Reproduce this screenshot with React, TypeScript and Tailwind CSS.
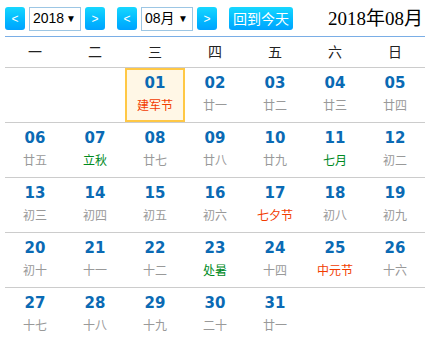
import React from 'react'

type Day = { d: string; l: string; c?: 'red' | 'green' }

const weeks: (Day | null)[][] = [
  [null, null, { d: '01', l: '建军节', c: 'red' }, { d: '02', l: '廿一' }, { d: '03', l: '廿二' }, { d: '04', l: '廿三' }, { d: '05', l: '廿四' }],
  [{ d: '06', l: '廿五' }, { d: '07', l: '立秋', c: 'green' }, { d: '08', l: '廿七' }, { d: '09', l: '廿八' }, { d: '10', l: '廿九' }, { d: '11', l: '七月', c: 'green' }, { d: '12', l: '初二' }],
  [{ d: '13', l: '初三' }, { d: '14', l: '初四' }, { d: '15', l: '初五' }, { d: '16', l: '初六' }, { d: '17', l: '七夕节', c: 'red' }, { d: '18', l: '初八' }, { d: '19', l: '初九' }],
  [{ d: '20', l: '初十' }, { d: '21', l: '十一' }, { d: '22', l: '十二' }, { d: '23', l: '处暑', c: 'green' }, { d: '24', l: '十四' }, { d: '25', l: '中元节', c: 'red' }, { d: '26', l: '十六' }],
  [{ d: '27', l: '十七' }, { d: '28', l: '十八' }, { d: '29', l: '十九' }, { d: '30', l: '二十' }, { d: '31', l: '廿一' }, null, null],
]

const weekdays = ['一', '二', '三', '四', '五', '六', '日']

const font = { fontFamily: '"Liberation Sans", "Noto Sans CJK SC", sans-serif' }

const NavBtn = ({ children }: { children: React.ReactNode }) => (
  <button className="w-[20px] h-[23px] rounded-[3px] bg-gradient-to-b from-[#17d7ff] to-[#00a2ff] text-white text-[12px] leading-none flex items-center justify-center">
    {children}
  </button>
)

const Select = ({ value }: { value: string }) => (
  <div className="w-[52px] h-[24px] border border-[#9cc6e4] bg-white flex items-center justify-between pl-[3px] pr-[4px] text-[14px] text-black">
    <span>{value}</span>
    <span className="text-[10px]">▼</span>
  </div>
)

export default function App() {
  return (
    <div className="w-[430px] h-[344px] bg-white px-[5px] overflow-hidden" style={font}>
      {/* header */}
      <div className="flex items-center h-[37px] pt-[1px] border-b border-[#7aaee6]">
        <NavBtn>&lt;</NavBtn>
        <div className="ml-[4px]"><Select value="2018" /></div>
        <div className="ml-[4px]"><NavBtn>&gt;</NavBtn></div>
        <div className="ml-[12px]"><NavBtn>&lt;</NavBtn></div>
        <div className="ml-[4px]"><Select value="08月" /></div>
        <div className="ml-[4px]"><NavBtn>&gt;</NavBtn></div>
        <button className="ml-[12px] w-[64px] h-[23px] rounded-[3px] bg-gradient-to-b from-[#17d7ff] to-[#00a2ff] text-white text-[14px] leading-none">
          回到今天
        </button>
        <div
          className="ml-auto text-[19px] text-black leading-none mr-[2px]"
          style={{ fontFamily: '"Liberation Serif", "Noto Sans CJK SC", serif' }}
        >
          2018年08月
        </div>
      </div>

      {/* weekdays */}
      <div className="grid grid-cols-7 h-[31px] border-b border-[#cccccc]">
        {weekdays.map((w) => (
          <div key={w} className="flex items-center justify-center text-[14px] text-[#222]">
            {w}
          </div>
        ))}
      </div>

      {/* days */}
      {weeks.map((week, i) => (
        <div
          key={i}
          className={'grid grid-cols-7 h-[55px] ' + (i < weeks.length - 1 ? 'border-b border-[#cccccc]' : '')}
        >
          {week.map((day, j) =>
            day ? (
              <div
                key={j}
                className={
                  'flex flex-col items-center ' +
                  (day.d === '01' ? 'border-2 border-[#ffc845] bg-[#fff7e6] pt-[3px]' : 'pt-[5px]')
                }
              >
                <span
                  className="text-[15px] font-bold leading-[20px] text-[#0a6ab4]"
                  style={{ fontFamily: '"DejaVu Sans", sans-serif' }}
                >
                  {day.d}
                </span>
                <span
                  className={
                    'mt-[6px] text-[12px] leading-[14px] ' +
                    (day.c === 'red' ? 'text-[#f23c00]' : day.c === 'green' ? 'text-[#008a1f]' : 'text-[#999999]')
                  }
                >
                  {day.l}
                </span>
              </div>
            ) : (
              <div key={j} />
            )
          )}
        </div>
      ))}
    </div>
  )
}
